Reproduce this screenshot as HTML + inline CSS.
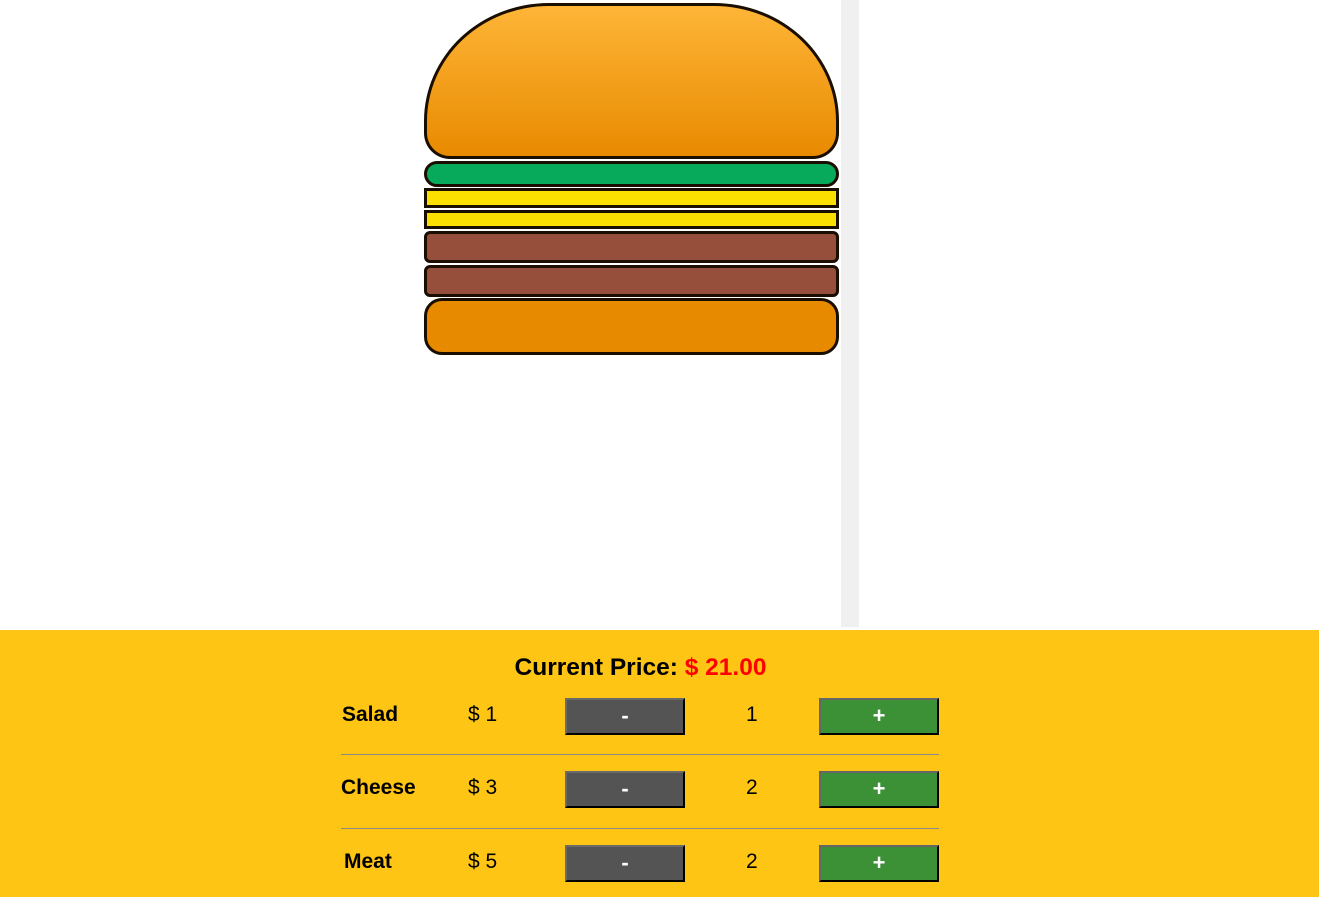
<!DOCTYPE html>
<html><head><style>
*{margin:0;padding:0;box-sizing:border-box}
body{width:1319px;height:897px;background:#fff;position:relative;overflow:hidden;font-family:"Segoe UI","Liberation Sans",sans-serif}
.l{position:absolute;left:424px;width:415px;border:3px solid #1a0e00}
.btn{position:absolute;width:120px;height:37px;border:2px outset #777;color:#fff;font-weight:bold;font-size:22px;text-align:center;line-height:31px}
.m{background:#545454;border-color:#6a6a6a #222 #222 #6a6a6a}
.p{background:#3c9137;border-color:#666 #222 #222 #666}
.t{position:absolute;font-size:21px;line-height:24px}
.hr{position:absolute;left:341px;width:598px;height:1px;background:#8a8a8a}
</style></head><body>
<div class="l" style="top:3px;height:156px;border-radius:125px 125px 26px 26px/118px 118px 26px 26px;background:linear-gradient(#feb537,#e88a00)"></div>
<div class="l" style="top:161px;height:26px;border-radius:13px;background:#07a95a"></div>
<div class="l" style="top:188px;height:20px;background:#fbdf00"></div>
<div class="l" style="top:210px;height:19px;background:#fbdf00"></div>
<div class="l" style="top:231px;height:32px;border-radius:6px;background:#964f3b"></div>
<div class="l" style="top:265px;height:32px;border-radius:6px;background:#964f3b"></div>
<div class="l" style="top:298px;height:57px;border-radius:18px;background:#e88a00"></div>
<div style="position:absolute;left:841px;top:0;width:18px;height:627px;background:#f0f0f0"></div>
<div style="position:absolute;left:0;top:630px;width:1319px;height:267px;background:#fec514"></div>
<div class="t" style="left:0;width:1281px;top:654px;text-align:center;font-weight:bold;font-size:24.5px;line-height:28px">Current Price: <span style="color:#f00">$ 21.00</span></div>
<div class="t" style="left:342px;top:703px;font-weight:bold">Salad</div>
<div class="t" style="left:468px;top:703px">$ 1</div>
<div class="btn m" style="left:565px;top:698px">-</div>
<div class="t" style="left:746px;top:703px">1</div>
<div class="btn p" style="left:819px;top:698px">+</div>
<div class="hr" style="top:754px"></div>
<div class="t" style="left:341px;top:776px;font-weight:bold">Cheese</div>
<div class="t" style="left:468px;top:776px">$ 3</div>
<div class="btn m" style="left:565px;top:771px">-</div>
<div class="t" style="left:746px;top:776px">2</div>
<div class="btn p" style="left:819px;top:771px">+</div>
<div class="hr" style="top:828px"></div>
<div class="t" style="left:344px;top:850px;font-weight:bold">Meat</div>
<div class="t" style="left:468px;top:850px">$ 5</div>
<div class="btn m" style="left:565px;top:845px">-</div>
<div class="t" style="left:746px;top:850px">2</div>
<div class="btn p" style="left:819px;top:845px">+</div>
</body></html>
